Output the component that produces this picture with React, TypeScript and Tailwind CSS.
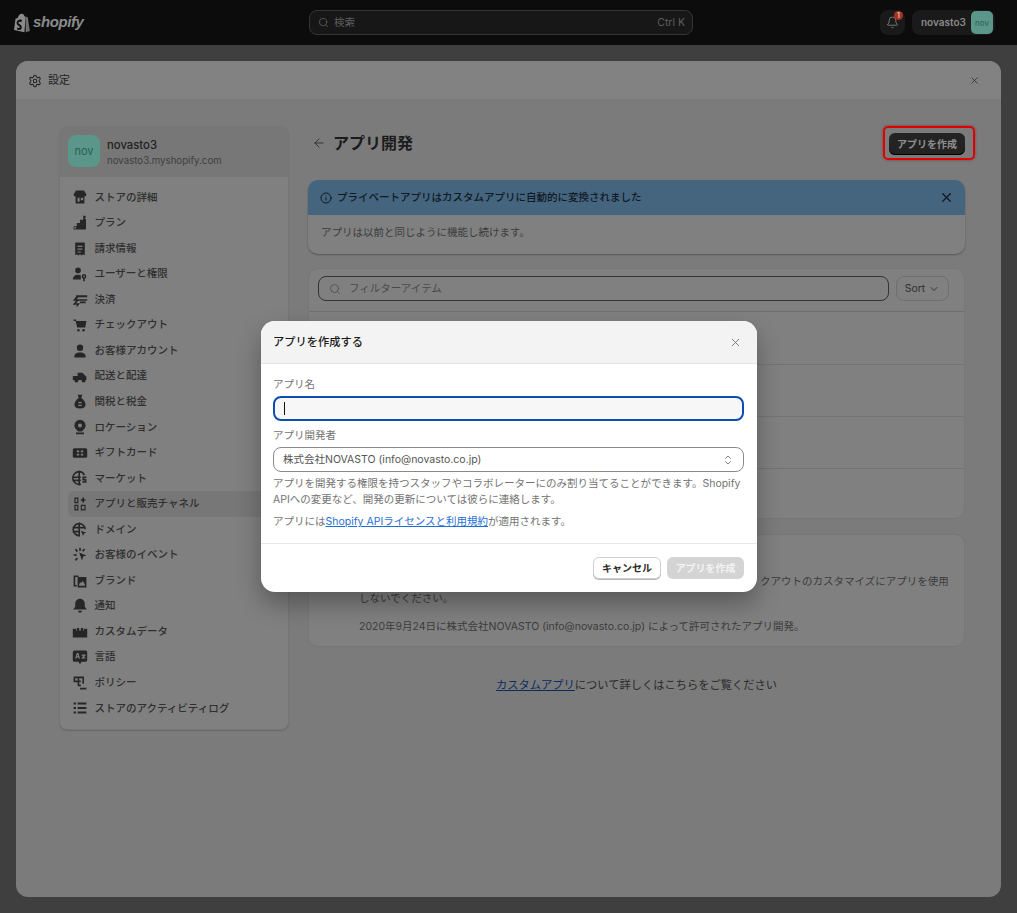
import { ArrowLeft, ChevronDown, ChevronsUpDown, Info, Search, Settings, X, Bell } from "lucide-react";
import type { ReactNode } from "react";

const fontStack = "font-['Inter','Noto_Sans_CJK_JP',sans-serif]";

const Ico = ({ children }: { children: ReactNode }) => (
  <svg viewBox="0 0 20 20" className="w-[16px] h-[16px] shrink-0 -ml-[0.500px]" fill="#262626">
    {children}
  </svg>
);

const navItems: { label: string; icon: ReactNode }[] = [
  {
    label: "ストアの詳細",
    icon: <path fillRule="evenodd" d="M5 2h10l3 5c0 1.500-1 2.500-2.500 2.500v8.500h-11v-8.500c-1.500 0-2.500-1-2.500-2.500zM7 11v5h2.500v-5zM11 11v3h3v-3z" />,
  },
  {
    label: "プラン",
    icon: <path d="M14 1h3v3h-1v1h1.500v13H2v-4h4v-4h4V6h4zM3 15v2h2v-2z" />,
  },
  {
    label: "請求情報",
    icon: <path fillRule="evenodd" d="M4 2h12v16l-2-1.500-2 1.500-2-1.500-2 1.500-2-1.500-2 1.500zM7 6v1.500h6V6zM7 9.500V11h6V9.500zM7 13v1.500h4V13z" />,
  },
  {
    label: "ユーザーと権限",
    icon: (
      <>
        <circle cx="7.500" cy="5.500" r="3.500" />
        <path d="M1 17c0-4 2.500-6 6.500-6 1.500 0 2.500.3 3.500 1v5z" />
        <path fillRule="evenodd" d="M15 10a3 3 0 0 1 1 5.800V19h-2v-3.200A3 3 0 0 1 15 10zm0 2a1 1 0 1 0 0 2 1 1 0 0 0 0-2z" />
      </>
    ),
  },
  {
    label: "決済",
    icon: <path d="M5 4h14v2.500H8L6 9h13v2H8l-3 3H10l-3 4H5l1.500-2H1l4-5H1l4-5zM10 12h7v2h-7z" />,
  },
  {
    label: "チェックアウト",
    icon: (
      <>
        <path d="M2 3h3l.5 2H18l-1.500 8H6.500L4.500 5H2z" />
        <circle cx="8" cy="16.500" r="1.500" />
        <circle cx="14.500" cy="16.500" r="1.500" />
      </>
    ),
  },
  {
    label: "お客様アカウント",
    icon: (
      <>
        <circle cx="10" cy="6" r="4" />
        <path d="M3 17c0-3.500 3-5 7-5s7 1.500 7 5v1H3z" />
      </>
    ),
  },
  {
    label: "配送と配達",
    icon: (
      <>
        <path d="M1 10h6V6h6l5 5v4H1z" />
        <circle cx="5.500" cy="15.500" r="2.500" />
        <circle cx="14.500" cy="15.500" r="2.500" />
      </>
    ),
  },
  {
    label: "関税と税金",
    icon: <path fillRule="evenodd" d="M7 1h6l-1.500 4c3 2 5.500 5 5.500 8.500 0 3-2.500 4.500-7 4.500s-7-1.500-7-4.500C3 10 5.500 7 8.500 5zM8 10v1.500h4V10zM8 13.500V15h4v-1.500z" />,
  },
  {
    label: "ロケーション",
    icon: <path fillRule="evenodd" d="M10 1a7 7 0 0 1 7 7c0 3-2.500 5.500-5 7.500h-4C5.500 13.500 3 11 3 8a7 7 0 0 1 7-7zm0 4.500a2.500 2.500 0 1 0 0 5 2.500 2.500 0 0 0 0-5zM5 17h10v2H5z" />,
  },
  {
    label: "ギフトカード",
    icon: <path fillRule="evenodd" d="M3 4h14a2 2 0 0 1 2 2v8a2 2 0 0 1-2 2H3a2 2 0 0 1-2-2V6a2 2 0 0 1 2-2zm3 3v2h3V7zm5 0v2h3V7zm-5 4v2h3v-2zm5 0v2h3v-2z" />,
  },
  {
    label: "マーケット",
    icon: (
      <>
        <path fillRule="evenodd" d="M9 1a8 8 0 0 1 7.500 5.500H14.500A6 6 0 0 0 9 3a6 6 0 0 0 0 14c.800 0 1.500-.1 2-.3V19H9A9 9 0 0 1 9 1z" />
        <path d="M8 1h2v18H8zM1 8h10v2H1zM2 12h9v2H2zM13 8h5v2h-3v1h3v5h-5v-2h3v-1h-3z" />
      </>
    ),
  },
  {
    label: "アプリと販売チャネル",
    icon: <path fillRule="evenodd" d="M3 2h5v7H3zm1.500 1.500v4h2v-4zM3 11h5v7H3zm1.500 1.500v4h2v-4zM11 11h6v7h-6zm1.500 1.500v4h3v-4zM13 2h2v2h2v2h-2v2h-2V6h-2V4h2z" />,
  },
  {
    label: "ドメイン",
    icon: (
      <>
        <path fillRule="evenodd" d="M9 1a8.500 8.500 0 0 1 8.500 8h-2A6.500 6.500 0 1 0 9 16v2A8.500 8.500 0 0 1 9 1z" />
        <path d="M8 1h2v17H8zM1 6h14v2H1zM1 11h8v2H1zM11 11l7 2.500-3 1-1 3z" />
      </>
    ),
  },
  {
    label: "お客様のイベント",
    icon: <path d="M9 1h2v4H9zM2 9h4v2H2zM3.500 3.500 5 2l2.500 3L6 6.500zM15 2l1.500 1.500L14 6l-1.500-1.500zM3.500 16 6 13l1.500 1.500L5 17.500zM9 7l9 3.500-4 1.500-1.500 5z" />,
  },
  {
    label: "ブランド",
    icon: (
      <>
        <path fillRule="evenodd" d="M2 3h6v2H4v10h2v2H2z" />
        <path fillRule="evenodd" d="M7 5h11v13H7zm2 9v2h7v-2l-2.500-4-2 2.500-1-1z" />
      </>
    ),
  },
  {
    label: "通知",
    icon: <path d="M10 1a6 6 0 0 1 6 6v4l2.500 3.500h-17L4 11V7a6 6 0 0 1 6-6zM7.500 16h5a2.500 2.500 0 0 1-5 0z" />,
  },
  {
    label: "カスタムデータ",
    icon: <path d="M1 6h4v2h1V5h3v3h2V5h3v3h1V6h4v11H1z" />,
  },
  {
    label: "言語",
    icon: (
      <>
        <path fillRule="evenodd" d="M3 2h14a2 2 0 0 1 2 2v10a2 2 0 0 1-2 2h-5l-2 3-2-3H3a2 2 0 0 1-2-2V4a2 2 0 0 1 2-2zm3 3-2 7h1.500l.4-1.500h2.200l.4 1.500H10L8 5zm.700 2.500h.6l.4 1.500H6.300zM12 7v1.500h2.500L12 11v1h5v-1.500h-2.500L17 8V7z" />
      </>
    ),
  },
  {
    label: "ポリシー",
    icon: <path fillRule="evenodd" d="M2 2h13v9h-2V4H9v3h2v2H9v3h2v2H7V9H2zm2 2v3h3V4zM10 16h8v2h-8z" />,
  },
  {
    label: "ストアのアクティビティログ",
    icon: <path d="M2 3h3v2.500H2zM7 3h11v2.500H7zM2 8.700h3v2.500H2zM7 8.700h11v2.500H7zM2 14.500h3V17H2zM7 14.500h11V17H7z" />,
  },
];

const ShopifyMark = () => (
  <svg viewBox="0 0 20 24" className="w-[17px] h-[20px]">
    <path d="M15 4.500 13.500 4C13 2 12 1 10.500 1 8 1 6 3.500 5.500 6L2.800 7 1 20.500 13.500 23l1.500-18.500z" fill="#8b8b8b" />
    <path d="M15 4.500V23l5-1.300L17.500 5z" fill="#707070" />
    <path d="M10.500 8.500 9.800 11c-2-1-3.500-.3-3.500.8 0 1.700 4 2 4 5.500 0 3-3.500 3.800-5.800 2.300l.6-2.200c1.400 1 2.800 1 2.800-.2 0-1.800-3.700-2-3.700-5.400 0-3.300 3.500-4.800 5.800-3.800z" fill="#0c0c0c" />
  </svg>
);

const Avatar = ({ size }: { size: "sm" | "lg" }) => (
  <div
    className={
      size === "lg"
        ? "w-8 h-8 rounded-lg bg-[#5a9689] text-[#2c5f54] text-[11px] flex items-center justify-center shrink-0"
        : "w-[22px] h-[23px] rounded-[5px] bg-[#5a9689] text-[#2c5f54] text-[8px] flex items-center justify-center shrink-0"
    }
  >
    nov
  </div>
);

const TopBar = () => (
  <header className="h-[45px] shrink-0 bg-[#0c0c0c] relative flex items-center pl-[13px] pr-[22px]">
    <div className="flex items-center gap-[3px] w-[296px]">
      <ShopifyMark />
      <span className="font-['Liberation_Sans',sans-serif] italic font-bold text-[15px] text-[#8b8b8b] tracking-[-0.4px]">shopify</span>
    </div>
    <div className="w-[384px] h-[25px] rounded-lg border border-[#353535] bg-[#171717] flex items-center pl-[8px] pr-[7px] text-[10.5px] text-[#5f5f5f]">
      <Search size={11} strokeWidth={1.500} className="text-[#6a6a6a]" />
      <span className="ml-[5px]">検索</span>
      <span className="ml-auto">Ctrl K</span>
    </div>
    <div className="ml-auto flex items-center gap-[7px]">
      <div className="relative w-[25px] h-[25px] rounded-lg bg-[#1a1a1a] flex items-center justify-center">
        <Bell size={13} strokeWidth={1.500} className="text-[#8a8a8a]" />
        <span className="absolute right-[2px] top-[1px] w-[9px] h-[9px] rounded-full bg-[#a8321f] text-[#d8c8c4] text-[7px] font-semibold leading-[9px] text-center">1</span>
      </div>
      <div className="h-[25px] w-[83px] rounded-lg bg-[#1a1a1a] flex items-center justify-between pl-[9px] pr-[2px]">
        <span className="text-[10px] font-semibold text-[#8a8a8a]">novasto3</span>
        <Avatar size="sm" />
      </div>
    </div>
  </header>
);

const Sidebar = () => (
  <aside className="w-[230px] h-[604px] shrink-0 rounded-lg bg-[#808080] border border-[#767676] overflow-hidden shadow-[0_1px_1px_rgba(0,0,0,0.15)]">
    <div className="h-[50px] bg-[#777777] flex items-start gap-[7px] pl-[8px] pt-[8px]">
      <Avatar size="lg" />
      <div className="leading-[15px] pt-[3px]">
        <div className="text-[11.300px] font-medium text-[#202020]">novasto3</div>
        <div className="text-[9.700px] text-[#3f3f3f]">novasto3.myshopify.com</div>
      </div>
    </div>
    <ul className="pt-[7.700px] px-[8px]">
      {navItems.map((item) => (
        <li
          key={item.label}
          className={`h-[25.55px] flex items-center gap-[7px] pl-[4px] rounded-md text-[10.5px] font-medium text-[#2f2f2f] ${
            item.label === "アプリと販売チャネル" ? "bg-[#777777]" : ""
          }`}
        >
          {item.icon && <Ico>{item.icon}</Ico>}
          <span>{item.label}</span>
        </li>
      ))}
    </ul>
  </aside>
);

const MainColumn = () => (
  <main className="w-[657px] shrink-0">
    <div className="h-[34px] flex items-center justify-between">
      <div className="flex items-center gap-[7px] pl-[4px]">
        <ArrowLeft size={14} strokeWidth={1.500} className="text-[#2a2a2a]" />
        <h1 className="text-[16px] font-bold text-[#1c1c1c]">アプリ開発</h1>
      </div>
      <div className="relative mt-[2px]">
        <button className="block w-[76px] h-[22px] rounded-md bg-[#232323] text-[#8f8f8f] text-[10px] font-bold shadow-[inset_0_-1px_0_#000]">
          アプリを作成
        </button>
        <div className="absolute -left-[6px] -top-[7px] -right-[10px] -bottom-[5px] rounded-[5px] border-2 border-[#e00000] shadow-[0_0_3px_rgba(120,0,0,0.5)]" />
      </div>
    </div>

    <section className="mt-[20px] h-[74px] rounded-[10px] bg-[#808080] overflow-hidden shadow-[0_1px_2px_rgba(0,0,0,0.3)]">
      <div className="h-[35px] bg-[#45647e] flex items-center pl-[12px] pr-[11px] text-[10.5px] font-medium text-[#0f1a24]">
        <Info size={12} strokeWidth={2} className="text-[#0f1a24] mr-[5px]" />
        <span>プライベートアプリはカスタムアプリに自動的に変換されました</span>
        <X size={15} strokeWidth={2} className="ml-auto text-[#0f1a24]" />
      </div>
      <p className="pl-[13px] pt-[10px] text-[10.5px] text-[#3c3c3c]">アプリは以前と同じように機能し続けます。</p>
    </section>

    <section className="mt-[14px] h-[251px] rounded-[10px] bg-[#808080] border border-[#777777] overflow-hidden">
      <div className="h-[43px] flex items-start gap-[7px] pl-[9px] pr-[15px] pt-[7px] border-b border-[#6f6f6f]">
        <div className="h-[25px] w-[571px] rounded-lg border border-[#333333] flex items-center pl-[10px] text-[10.5px] text-[#4a4a4a]">
          <Search size={12} strokeWidth={1.500} className="text-[#4a4a4a] mr-[8px]" />
          フィルターアイテム
        </div>
        <div className="h-[25px] w-[53px] rounded-lg border border-[#6f6f6f] flex items-center justify-center gap-[3px] text-[10.5px] text-[#303030]">
          Sort
          <ChevronDown size={12} strokeWidth={2} />
        </div>
      </div>
      <div className="h-[53px] border-b border-[#747474]" />
      <div className="h-[52px] border-b border-[#747474]" />
      <div className="h-[52px] border-b border-[#747474]" />
    </section>

    <section className="mt-[15px] h-[113px] rounded-[10px] bg-[#808080] border border-[#777777] pl-[50px] pt-[38px] text-[10.5px] leading-[17px] text-[#3c3c3c]">
      <p className="whitespace-nowrap">
        テーマの編集、アプリの開発、サードパーティ製アプリの作成に、当ストアのチェッ
        クアウトのカスタマイズにアプリを使用
        <br />
        しないでください。
      </p>
      <p className="mt-[11px]">2020年9月24日に株式会社NOVASTO (info@novasto.co.jp) によって許可されたアプリ開発。</p>
    </section>

    <p className="mt-[30px] text-center text-[11.250px] text-[#2a2a2a]">
      <a className="underline text-[#0b2c5e]">カスタムアプリ</a>について詳しくはこちらをご覧ください
    </p>
  </main>
);

const CreateAppDialog = () => (
  <div className="absolute left-[261px] top-[321px] w-[496px] h-[271px] rounded-[14px] bg-white overflow-hidden shadow-[0_12px_24px_rgba(0,0,0,0.3)]">
    <div className="h-[43px] bg-[#f3f3f3] border-b border-[#e3e3e3] flex items-center justify-between pl-[12px] pr-[15px]">
      <h2 className="text-[11.25px] font-medium text-[#1a1a1a]">アプリを作成する</h2>
      <X size={13} strokeWidth={1.500} className="text-[#666666]" />
    </div>
    <div className="pl-[12px] pr-[13px] pt-[13px] text-[10.5px] text-[#737373]">
      <label className="block leading-[15px]">アプリ名</label>
      <div className="mt-[4px] h-[25px] rounded-lg bg-[#f7f7f7] border-2 border-[#0b4db5] flex items-center pl-[9px]">
        <span className="w-px h-[13px] bg-[#111111]" />
      </div>
      <label className="block mt-[7px] leading-[15px]">アプリ開発者</label>
      <div className="mt-[4px] h-[25px] rounded-lg border border-[#8a8a8a] flex items-center justify-between pl-[9px] pr-[9px] text-[#555555]">
        株式会社NOVASTO (info@novasto.co.jp)
        <ChevronsUpDown size={12} strokeWidth={1.500} className="text-[#555555]" />
      </div>
      <p className="mt-[4px] leading-[16px] whitespace-nowrap">
        アプリを開発する権限を持つスタッフやコラボレーターにのみ割り当てることができます。Shopify
        <br />
        APIへの変更など、開発の更新については彼らに連絡します。
      </p>
      <p className="mt-[6px] leading-[16px]">
        アプリには<a className="underline text-[#1f6fd6]">Shopify APIライセンスと利用規約</a>が適用されます。
      </p>
    </div>
    <div className="absolute left-0 right-0 top-[222px] h-[49px] border-t border-[#e6e6e6] flex items-start justify-end gap-[6px] pr-[13px] pt-[13px]">
      <button className="w-[68px] h-[22px] rounded-md border border-[#cfcfcf] bg-white text-[10px] font-bold text-[#2a2a2a] shadow-[0_1px_0_#b5b5b5]">
        キャンセル
      </button>
      <button className="w-[77px] h-[22px] rounded-md bg-[#d4d4d4] text-[10px] font-bold text-[#f3f3f3]">アプリを作成</button>
    </div>
  </div>
);

export default function App() {
  return (
    <div className={`relative w-[1017px] h-[913px] overflow-hidden bg-[#3f3f3f] flex flex-col ${fontStack}`}>
      <TopBar />
      <div className="mx-[16px] mt-[16px] h-[836px] rounded-xl bg-[#7b7b7b] overflow-hidden">
        <div className="h-[38px] bg-[#828282] flex items-center justify-between pl-[12px] pr-[21px] text-[#222222]">
          <div className="flex items-center gap-[6px] text-[11px] pt-[1px]">
            <Settings size={14} strokeWidth={1.750} />
            <span>設定</span>
          </div>
          <X size={11} strokeWidth={1.500} />
        </div>
        <div className="flex gap-[19px] pl-[43px] pt-[27px]">
          <Sidebar />
          <MainColumn />
        </div>
      </div>
      <CreateAppDialog />
    </div>
  );
}
